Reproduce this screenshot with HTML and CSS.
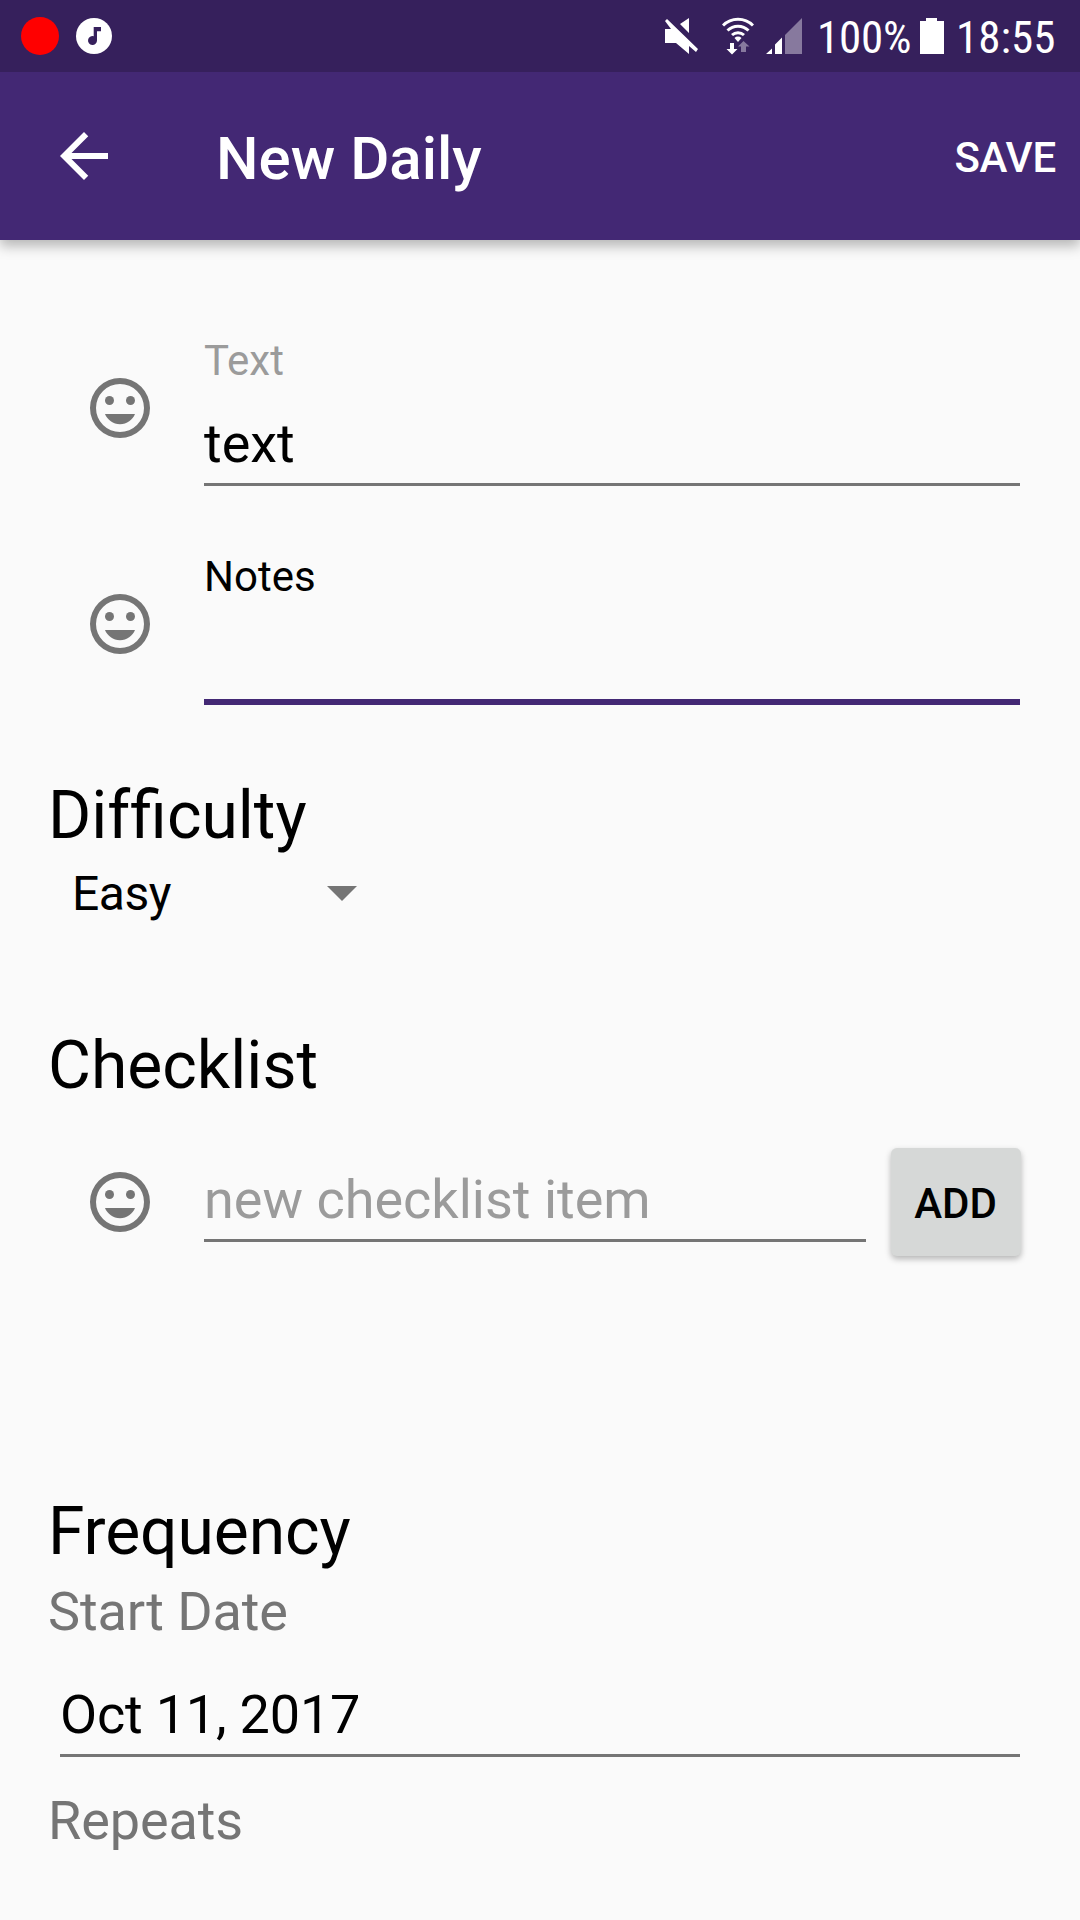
FILE: index.html
```html
<!DOCTYPE html>
<html lang="en">
<head>
<meta charset="utf-8">
<title>New Daily</title>
<link rel="stylesheet" href="styles.css">
</head>
<body>
<svg class="defs" width="0" height="0" aria-hidden="true">
  <symbol id="mood" viewBox="0 0 24 24">
    <path d="M12 2a10 10 0 1 0 0 20a10 10 0 0 0 0-20zm0 18a8 8 0 1 1 0-16a8 8 0 0 1 0 16z"/>
    <circle cx="8.5" cy="9.5" r="1.5"/><circle cx="15.5" cy="9.5" r="1.5"/>
    <path d="M7 14h10c-.8 2-2.7 3.4-5 3.4S7.8 16 7 14z"/>
  </symbol>
</svg>

<header class="status">
  <svg class="record" viewBox="0 0 38 38"><circle cx="19" cy="19" r="19"/></svg>
  <svg class="music" viewBox="0 0 36 36"><circle cx="18" cy="18" r="18" fill="#fff"/><path fill="#36205c" d="M17.700 9h7.300v4.200h-4v9.300a4.500 4.500 0 1 1-3.300-4.300z"/></svg>
  <div class="spacer"></div>
  <svg class="mute" viewBox="1 0 34 37"><path d="M25 1v15l-9-9zM1 12h6l-6-8 2-2 31 30-2 3-7-6v8L12 26H1z"/></svg>
  <svg class="wifi" viewBox="0 0 32 38">
    <g fill="none" stroke="#fff" stroke-width="3"><path d="M1 8.500a21 21 0 0 1 30 0"/><path d="M5.500 13.500a15 15 0 0 1 21 0"/><path d="M10 18a9 9 0 0 1 12 0"/></g>
    <path d="M16 25l-3.500-4a5 5 0 0 1 7 0z"/><path d="M8 26h4v6h3.500l-5.500 5.500L4.500 32H8z"/><path class="dim" d="M19 35h5v-5.500h3.500L21.500 24 16 29.500h3z"/>
  </svg>
  <svg class="signal" viewBox="0 0 36 36"><path d="M0 36l6-5.500V36zM9 36V26.500l7-7V36z"/><path class="dim" d="M19 36V17L36 0v36z"/></svg>
  <span class="percent">100%</span>
  <svg class="battery" viewBox="0 0 24 36"><path d="M0 3h6V0h11v3h7v33H0z"/></svg>
  <span class="clock">18:55</span>
</header>

<nav class="toolbar">
  <svg class="back" viewBox="0 0 24 24"><path d="M20 11H7.830l5.590-5.590L12 4l-8 8 8 8 1.410-1.410L7.830 13H20z"/></svg>
  <h1 class="title">New Daily</h1>
  <span class="save">SAVE</span>
</nav>

<main class="form">
  <div class="row">
    <svg class="mood"><use href="#mood"/></svg>
    <div class="field"><label class="label">Text</label><div class="value">text</div></div>
  </div>
  <div class="row notes">
    <svg class="mood"><use href="#mood"/></svg>
    <div class="field focused"><label class="label">Notes</label><div class="value"></div></div>
  </div>

  <h2 class="heading difficulty">Dif<span class="unjoined">ficulty</span></h2>
  <div class="spinner"><span>Easy</span><svg class="caret" viewBox="0 0 30 15"><path d="M0 0h30L15 15z"/></svg></div>

  <h2 class="heading checklist">Checklist</h2>
  <div class="item">
    <svg class="mood"><use href="#mood"/></svg>
    <div class="field"><div class="value hint">new checklist item</div></div>
    <button class="add">ADD</button>
  </div>

  <h2 class="heading frequency">Frequency</h2>
  <div class="caption">Start Date</div>
  <div class="field date"><div class="value">Oct 11, 2017</div></div>
  <div class="caption">Repeats</div>
</main>
</body>
</html>
```
FILE: styles.css
```css
* { box-sizing: border-box; }
body {
  margin: 0;
  width: 1080px;
  height: 1920px;
  overflow: hidden;
  background: #fafafa;
  color: #000;
  font-family: Roboto, sans-serif;
}
h1, h2 { margin: 0; font-weight: 400; }
svg { display: block; flex: none; }
.defs { position: absolute; }

.status {
  position: relative;
  z-index: 1;
  height: 72px;
  display: flex;
  align-items: flex-start;
  padding: 0 26px 0 21px;
  background: #36205c;
  color: #fff;
  fill: #fff;
  font: 45px/54px "Roboto Condensed", Roboto, sans-serif;
  font-stretch: 75%;
}
.spacer { flex: 1; }
.dim { fill: #87799e; }
.record { width: 38px; height: 38px; margin-top: 17px; fill: #f00; }
.music { width: 36px; height: 36px; margin: 18px 0 0 17px; }
.mute { width: 34px; height: 37px; margin-top: 17px; }
.wifi { width: 32px; height: 38px; margin: 17px 0 0 23px; }
.signal { width: 36px; height: 36px; margin: 18px 0 0 12px; }
.percent { width: 95px; margin: 11px 0 0 15px; letter-spacing: -.2px; }
.battery { width: 24px; height: 36px; margin: 18px 0 0 8px; }
.clock { width: 98px; margin: 11px 0 0 12px; }

.toolbar {
  position: relative;
  height: 168px;
  display: flex;
  align-items: center;
  padding: 0 24px 0 48px;
  background: #432874;
  color: #fff;
  fill: #fff;
  box-shadow: 0 6px 12px rgba(0, 0, 0, .28);
}
.back { width: 72px; height: 72px; }
.title { flex: 1; margin-left: 96px; padding-top: 5px; font-size: 60px; font-weight: 500; line-height: 70px; }
.save { padding-top: 4px; font-size: 42px; font-weight: 500; line-height: 50px; letter-spacing: -.2px; }

.form { padding: 96px 60px 0 48px; }
.row { display: flex; align-items: flex-start; padding-left: 36px; }
.notes { margin-top: 66px; }
.mood { width: 72px; height: 72px; fill: #757575; }
.row .mood { margin: 36px 48px 0 0; }
.field { flex: 1; border-bottom: 3px solid #757575; }
.focused { border-bottom: 6px solid #432874; }
.label { display: block; height: 76px; font-size: 42px; line-height: 50px; color: #9b9b9b; }
.focused .label { color: #000; }
.value { height: 71px; font-size: 54px; line-height: 64px; }
.hint { color: #9b9b9b; }

.heading { font-size: 66px; line-height: 78px; }
.difficulty { margin-top: 72px; }
.unjoined { display: inline-block; }
.spinner { display: flex; align-items: center; width: 309px; height: 56px; margin-top: 10px; padding-left: 24px; justify-content: space-between; font-size: 48px; line-height: 56px; letter-spacing: -.5px; }
.spinner span { padding-top: 2px; }
.caret { width: 30px; height: 15px; fill: #757575; }
.checklist { margin-top: 106px; }
.item { display: flex; align-items: flex-start; margin-top: 43px; padding-left: 36px; }
.item .mood { margin: 18px 48px 0 0; }
.item .field { margin-top: 20px; }
.add {
  width: 130px;
  height: 108px;
  margin: 0 -1px 0 25px;
  padding: 4px 1px 0 0;
  border: 0;
  border-radius: 6px;
  background: #d6d8d7;
  box-shadow: 0 3px 6px rgba(0, 0, 0, .28);
  color: #000;
  font: 500 42px/50px Roboto, sans-serif;
}
.frequency { margin-top: 237px; letter-spacing: -.1px; }
.caption { font-size: 54px; line-height: 64px; color: #757575; letter-spacing: -.1px; }
.frequency + .caption { margin-top: 9px; }
.date { margin: 39px 0 32px 12px; letter-spacing: -.2px; }
```
